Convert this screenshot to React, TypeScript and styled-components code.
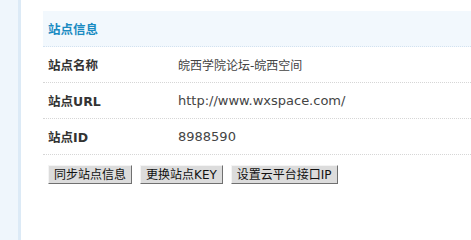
import React from 'react'
import styled, { createGlobalStyle } from 'styled-components'

const GlobalStyle = createGlobalStyle`
  html, body {
    margin: 0;
    padding: 0;
    background: #fff;
  }
  body {
    font-family: "DejaVu Sans", "Noto Sans CJK SC", sans-serif;
    font-size: 12px;
    color: #333;
  }
`

const Page = styled.div`
  display: flex;
  width: 100%;
  min-height: 100vh;
  overflow: hidden;
`

const Sidebar = styled.div`
  width: 18px;
  flex: none;
  background-color: #eff6fc;
  border-right: 3px solid #dceaf6;
`

const Main = styled.div`
  flex: 1;
  padding: 11px 0 0 22px;
`

const Panel = styled.div`
  width: 440px;
`

const Header = styled.div`
  height: 35px;
  display: flex;
  align-items: center;
  padding-left: 5px;
  background-color: #f2f8fd;
  border-bottom: 1px dotted #d3e2f0;
  color: #1a8bc2;
  font-size: 12.5px;
  font-weight: bold;
`

const Row = styled.div`
  display: flex;
  align-items: center;
  height: 35px;
  border-bottom: 1px dotted #d6d6d6;
`

const Label = styled.div`
  width: 130px;
  padding-left: 5px;
  font-size: 12.5px;
  font-weight: bold;
  color: #333;
`

const Value = styled.div<{ latin?: boolean }>`
  font-size: ${({ latin }) => (latin ? '13px' : '12px')};
  color: #444;
`

const Actions = styled.div`
  display: flex;
  gap: 8px;
  padding: 10px 0 0 5px;
`

const Button = styled.button`
  height: 19px;
  padding: 0 5px;
  font-family: "DejaVu Sans", "Noto Sans CJK SC", sans-serif;
  font-size: 12px;
  line-height: 16px;
  color: #111;
  background-color: #dcdcdc;
  border: 1px solid;
  border-color: #f4f4f4 #707070 #707070 #f4f4f4;
  border-radius: 0;
  cursor: pointer;
`

const rows = [
  { label: '站点名称', value: '皖西学院论坛-皖西空间', latin: false },
  { label: '站点URL', value: 'http://www.wxspace.com/', latin: true },
  { label: '站点ID', value: '8988590', latin: true },
]

export default function App() {
  return (
    <>
      <GlobalStyle />
      <Page>
        <Sidebar />
        <Main>
          <Panel>
            <Header>站点信息</Header>
            {rows.map(r => (
              <Row key={r.label}>
                <Label>{r.label}</Label>
                <Value latin={r.latin}>{r.value}</Value>
              </Row>
            ))}
            <Actions>
              <Button>同步站点信息</Button>
              <Button>更换站点KEY</Button>
              <Button>设置云平台接口IP</Button>
            </Actions>
          </Panel>
        </Main>
      </Page>
    </>
  )
}
